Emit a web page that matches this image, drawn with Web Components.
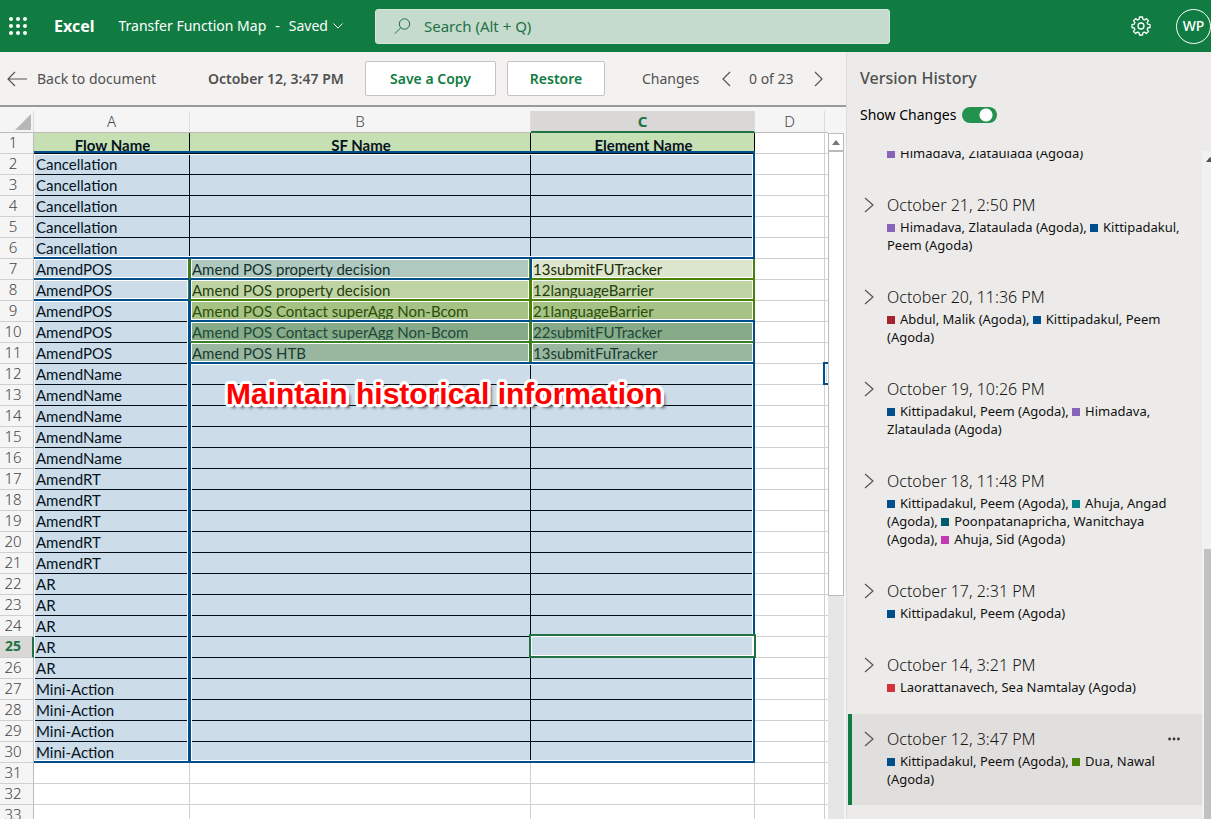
<!DOCTYPE html>
<html lang="en">
<head>
<meta charset="utf-8">
<title>Transfer Function Map - Version History</title>
<style>
  html, body { margin: 0; height: 100%; }
  body { font-family: "Noto Sans", "Open Sans", sans-serif; overflow: hidden; }
</style>
</head>
<body>
<workbook-app></workbook-app>

<template id="app-tpl">
  <style>
    :host { display: flex; flex-direction: column; height: 100vh; }
    main { flex: 1; min-height: 0; display: grid; grid-template-columns: minmax(0, 1fr) 365px; }
    .doc { min-width: 0; min-height: 0; display: flex; flex-direction: column; }
    sheet-grid { flex: 1; min-height: 0; }
  </style>
  <app-header></app-header>
  <main>
    <div class="doc">
      <version-toolbar></version-toolbar>
      <sheet-grid></sheet-grid>
    </div>
    <history-panel></history-panel>
  </main>
</template>

<template id="header-tpl">
  <style>
    :host { display: grid; grid-template-columns: 375px minmax(0, 1fr) 321px; align-items: center; height: 52px; background: #107c41; color: #fff; font-size: 14px; line-height: 20px; }
    button { border: 0; background: none; color: inherit; font: inherit; padding: 0; display: flex; align-items: center; }
    .left { display: flex; align-items: center; padding-left: 9px; white-space: nowrap; }
    .brand { color: #fff; text-decoration: none; font-size: 16px; font-weight: 700; margin-left: 27px; }
    .title { margin-left: 24px; gap: 9px; }
    .title svg { margin-left: -4px; }
    label { display: flex; align-items: center; box-sizing: border-box; height: 35px; padding-left: 18px; gap: 13px; background: #c5dbcd; border: 1px solid #d6e6dc; border-radius: 3px; color: #1e7145; font-size: 15px; }
    input { flex: 1; min-width: 0; border: 0; outline: 0; background: none; font: inherit; color: inherit; padding: 0; }
    input::placeholder { color: #1e7145; opacity: 1; }
    .right { display: flex; justify-content: flex-end; align-items: center; gap: 25px; }
    .avatar { box-sizing: border-box; width: 35px; height: 35px; border: 1px solid #fff; border-radius: 50%; justify-content: center; font-size: 14px; font-weight: 500; }
  </style>
  <div class="left">
    <button aria-label="App launcher">
      <svg width="18" height="18" fill="#fff"><circle cx="2" cy="2" r="2"/><circle cx="9" cy="2" r="2"/><circle cx="16" cy="2" r="2"/><circle cx="2" cy="9" r="2"/><circle cx="9" cy="9" r="2"/><circle cx="16" cy="9" r="2"/><circle cx="2" cy="16" r="2"/><circle cx="9" cy="16" r="2"/><circle cx="16" cy="16" r="2"/></svg>
    </button>
    <a class="brand" href="#">Excel</a>
    <button class="title"><span>Transfer Function Map</span><span>-</span><span>Saved</span>
      <svg width="10" height="6" fill="none" stroke="#fff"><path d="M.5 .5 5 5 9.500 .5"/></svg>
    </button>
  </div>
  <label><svg width="17" height="17" fill="none" stroke="#1e7145"><circle cx="10.500" cy="6" r="5.200"/><path d="M6.800 9.700 .8 15.700"/></svg>
    <input type="text" aria-label="Search" placeholder="Search (Alt + Q)"></label>
  <div class="right">
    <button aria-label="Settings">
      <svg width="20" height="20" viewBox="0 0 20 20" fill="none" stroke="#fff" stroke-width="1.300" stroke-linejoin="round"><path d="M8.500 1h3l.5 2.400 1.400.6 2-1.400 2.100 2.100-1.400 2 .6 1.400 2.300.5v2.900l-2.300.5-.6 1.400 1.400 2-2.100 2.100-2-1.400-1.400.6-.5 2.300h-3L8 16.700l-1.400-.6-2 1.400-2.100-2.100 1.400-2-.6-1.400L1 11.500V8.600l2.300-.5.6-1.400-1.400-2 2.100-2.100 2 1.400L8 3.400z"/><circle cx="10" cy="10" r="3"/></svg>
    </button>
    <button class="avatar" aria-label="Account">WP</button>
  </div>
</template>

<template id="toolbar-tpl">
  <style>
    :host { display: flex; align-items: center; box-sizing: border-box; height: 55px; flex: none; padding-left: 7px; border-bottom: 2px solid #999; background: #f4f2f1; color: #505050; font-size: 14px; line-height: 20px; white-space: nowrap; }
    button { border: 0; background: none; color: inherit; font: inherit; padding: 0; display: flex; align-items: center; justify-content: center; }
    .back { gap: 10px; width: 201px; justify-content: flex-start; }
    .date { width: 157px; font-weight: 600; color: #505050; }
    .action { box-sizing: border-box; height: 35px; background: #fff; border: 1px solid #c3c3c3; border-radius: 2px; color: #107c41; font-weight: 600; }
    .save { width: 131px; }
    .restore { width: 98px; margin-left: 11px; }
    .changes { margin-left: 37px; width: 80px; }
    .count { width: 65px; margin-left: 18px; }
  </style>
  <button class="back"><svg width="20" height="16" fill="none" stroke="#555" stroke-width="1.200"><path d="M20 8H1M8 1 1 8l7 7"/></svg>Back to document</button>
  <span class="date">October 12, 3:47 PM</span>
  <button class="action save">Save a Copy</button>
  <button class="action restore">Restore</button>
  <span class="changes">Changes</span>
  <button aria-label="Previous change"><svg width="9" height="16" fill="none" stroke="#555" stroke-width="1.200"><path d="M8 1 1 8l7 7"/></svg></button>
  <span class="count">0 of 23</span>
  <button aria-label="Next change"><svg width="9" height="16" fill="none" stroke="#555" stroke-width="1.200"><path d="M1 1l7 7-7 7"/></svg></button>
</template>

<template id="grid-tpl">
  <style>
    :host { display: grid; grid-template-columns: minmax(0, 1fr) 16px; padding: 4px 2px 0 0; background: #f5f5f5; overflow: hidden; }
    .view { position: relative; overflow: hidden; }
    table { width: 100%; table-layout: fixed; border-collapse: separate; border-spacing: 0; background: #fff; }
    th, td { box-sizing: border-box; height: 21px; padding: 0; border: solid #d0d0d0; border-width: 0 1px 1px 0; overflow: hidden; white-space: nowrap; }
    thead th { height: 22px; background: #f5f5f5; color: #444; font-size: 15px; line-height: 18px; font-weight: 300; padding-bottom: 2px; border-color: #dcdcdc; border-bottom-color: #bbb; }
    thead th:last-child { border-right: 0; }
    thead th.on { background: #d9d8d6; color: #217346; font-weight: 700; border-bottom: 2px solid #217346; padding-bottom: 1px; }
    tbody th { background: #f5f5f5; color: #444; font-size: 15px; line-height: 18px; font-weight: 300; padding: 0 7px 2px 0; border-right-color: #bbb; }
    tbody th.on { background: #d9d8d6; color: #217346; font-weight: 700; font-size: 14px; border-right: 2px solid #217346; padding-right: 6px; }
    td { font: 15px/20px Lato, "Noto Sans", sans-serif; color: #06131f; padding-left: 2px; }
    td:last-child { border-right: 0; }
    td.data { background: #ccdce8; border-color: #000c16; }
    td.title { background: #c6e0b4; border-color: #000; text-align: center; font-weight: 700; line-height: 16px; padding-top: 3px; }
    .corner { width: 0; height: 0; margin: 2px 2px 0 15px; border: solid transparent; border-width: 0 0 16px 16px; border-bottom-color: #b7b7b7; }
    .marks { position: absolute; inset: 22px 0 auto 0; display: grid; grid-template-columns: 34px 156px 341px 224px 70px 1fr; grid-template-rows: repeat(33, 21px); pointer-events: none; }
    .note { position: absolute; left: 226px; top: 265px; margin: 0; font: 700 30px/36px "Liberation Sans", Arial, sans-serif; color: #f00; white-space: nowrap;
      text-shadow: 3px 0 #fff, -3px 0 #fff, 0 3px #fff, 0 -3px #fff, 2px 2px #fff, -2px 2px #fff, 2px -2px #fff, -2px -2px #fff, 3px 1px #fff, 3px -1px #fff, -3px 1px #fff, -3px -1px #fff, 1px 3px #fff, -1px 3px #fff, 1px -3px #fff, -1px -3px #fff, 4px 4px 3px #555; }
    .scroll { display: grid; grid-template-rows: 18px 445px 1fr; margin-top: 22px; background: #e6e6e6; }
    .scroll button, .scroll div { box-sizing: border-box; border: 1px solid #bbb; background: #fff; padding: 0; margin: 0; display: flex; align-items: center; justify-content: center; }
    .scroll div { border-top-width: 2px; margin-top: -1px; }
  </style>
  <div class="view">
    <table>
      <colgroup><col style="width:34px"><col style="width:156px"><col style="width:341px"><col style="width:224px"><col style="width:70px"><col></colgroup>
      <thead><tr><th aria-label="Select all"><div class="corner"></div></th><th scope="col">A</th><th scope="col">B</th><th scope="col" class="on">C</th><th scope="col">D</th><th></th></tr></thead>
      <tbody></tbody>
    </table>
    <div class="marks"></div>
    <p class="note">Maintain historical information</p>
  </div>
  <div class="scroll"><button aria-label="Scroll up"><svg width="8" height="5" fill="#777"><path d="M4 0l4 5H0z"/></svg></button><div></div></div>
</template>

<template id="mark-tpl">
  <style>
    :host { display: block; box-sizing: border-box; margin: -2px 0 0 -1px; border: 2px solid #004e8c; box-shadow: inset 0 0 0 1px #fff; }
    :host([first]) { margin-left: 0; border-left: 0; }
    :host([top]) { margin-top: -3px; box-shadow: inset 0 1px #000c16, inset 0 2px #fff, inset 0 0 0 1px #fff; }
    :host([active]) { margin: -3px -1px 0 -2px; border-color: #217346; }
    :host([partial]) { margin-left: -2px; border-right: 0; background: #ccdce8; }
  </style>
</template>

<template id="panel-tpl">
  <style>
    :host { display: flex; flex-direction: column; min-height: 0; box-sizing: border-box; border-left: 1px solid #dcdcdc; background: #ecebe9; }
    h2 { margin: 14px 0 0 13px; font-size: 16px; line-height: 24px; font-weight: 500; color: #505050; }
    label { display: flex; align-items: center; gap: 6px; margin: 13px 0 0 13px; height: 24px; font-size: 14px; line-height: 18px; color: #000; }
    input { appearance: none; margin: 0; width: 35px; height: 16px; border-radius: 8px; background: radial-gradient(circle at 24px 8px, #fff 6px, #23914f 7px); }
    .list { flex: 1; min-height: 0; margin-top: 24px; display: grid; grid-template-columns: minmax(0, 1fr) 9px; overflow: hidden; }
    .items { min-height: 0; overflow: hidden; padding-left: 1px; }
    .items > :first-child { margin-top: -7px; }
    .bar { display: grid; grid-template-rows: 398px 1fr; background: #f1f1f1; }
    .bar svg { margin: 6px 0 0 4px; }
    .bar div { background: #c1c1c1; margin-left: 2px; }
  </style>
  <h2>Version History</h2>
  <label>Show Changes <input type="checkbox" role="switch" checked></label>
  <div class="list">
    <div class="items">
      <version-item><author-name color="#8764b8">Himadava, Zlataulada (Agoda)</author-name></version-item>
      <version-item date="October 21, 2:50 PM"><author-name color="#8764b8">Himadava, Zlataulada (Agoda),</author-name> <author-name color="#004e8c">Kittipadakul, Peem (Agoda)</author-name></version-item>
      <version-item date="October 20, 11:36 PM"><author-name color="#a4262c">Abdul, Malik (Agoda),</author-name> <author-name color="#004e8c">Kittipadakul, Peem (Agoda)</author-name></version-item>
      <version-item date="October 19, 10:26 PM"><author-name color="#004e8c">Kittipadakul, Peem (Agoda),</author-name> <author-name color="#8764b8">Himadava, Zlataulada (Agoda)</author-name></version-item>
      <version-item date="October 18, 11:48 PM"><author-name color="#004e8c">Kittipadakul, Peem (Agoda),</author-name> <author-name color="#038387">Ahuja, Angad (Agoda),</author-name> <author-name color="#005b70">Poonpatanapricha, Wanitchaya (Agoda),</author-name> <author-name color="#c239b3">Ahuja, Sid (Agoda)</author-name></version-item>
      <version-item date="October 17, 2:31 PM"><author-name color="#004e8c">Kittipadakul, Peem (Agoda)</author-name></version-item>
      <version-item date="October 14, 3:21 PM"><author-name color="#d13438">Laorattanavech, Sea Namtalay (Agoda)</author-name></version-item>
      <version-item date="October 12, 3:47 PM" selected><author-name color="#004e8c">Kittipadakul, Peem (Agoda),</author-name> <author-name color="#498205">Dua, Nawal (Agoda)</author-name></version-item>
    </div>
    <div class="bar"><svg width="8" height="6" fill="#505050"><path d="M4 0l4 5H0z"/></svg><div></div></div>
  </div>
</template>

<template id="item-tpl">
  <style>
    :host { display: block; margin-bottom: 1px; padding: 12px 22px 17px 16px; }
    :host(:not([date])) { padding-top: 0; }
    :host(:not([date])) header { display: none; }
    :host([selected]) { background: #e1dfdd; border-left: 4px solid #107c41; padding-left: 12px; }
    header { display: flex; align-items: center; height: 26px; }
    h3 { margin: 0 0 0 13px; flex: 1; font-size: 16px; line-height: 26px; font-weight: 300; color: #151413; }
    button { border: 0; background: none; padding: 0; display: flex; }
    .more { display: none; }
    :host([selected]) .more { display: flex; }
    .names { margin-left: 23px; font-size: 13px; line-height: 18px; font-weight: 400; color: #111; }
  </style>
  <header>
    <button aria-label="Expand"><svg width="10" height="16" fill="none" stroke="#555" stroke-width="1.200"><path d="M1 1l8 7-8 7"/></svg></button>
    <h3></h3>
    <button class="more" aria-label="More options"><svg width="12" height="4" fill="#333"><circle cx="1.600" cy="2" r="1.400"/><circle cx="6" cy="2" r="1.400"/><circle cx="10.400" cy="2" r="1.400"/></svg></button>
  </header>
  <div class="names"><slot></slot></div>
</template>

<template id="author-tpl">
  <style>
    :host { display: inline; }
    i { display: inline-block; width: 8px; height: 8px; margin-right: 5px; }
  </style><i></i><slot></slot></template>

<script>
  const define = (name, tpl, setup) => customElements.define(name, class extends HTMLElement {
    constructor() {
      super();
      this.attachShadow({ mode: 'open' }).append(document.getElementById(tpl).content.cloneNode(true));
    }
    connectedCallback() { if (setup && !this.ready) { this.ready = true; setup(this, this.shadowRoot); } }
  });

  define('author-name', 'author-tpl', (el, root) => {
    root.querySelector('i').style.background = el.getAttribute('color');
  });
  define('version-item', 'item-tpl', (el, root) => {
    root.querySelector('h3').textContent = el.getAttribute('date') || '';
  });
  define('history-panel', 'panel-tpl');
  define('change-mark', 'mark-tpl');
  define('version-toolbar', 'toolbar-tpl');
  define('app-header', 'header-tpl');

  const flows = [['Cancellation', 5], ['AmendPOS', 5], ['AmendName', 5], ['AmendRT', 5], ['AR', 5], ['Mini-Action', 4]]
    .flatMap(([name, n]) => Array(n).fill(name));
  // Row number: [B text, C text, B fill, C fill, B text colour, C text colour]
  const edited = {
    7: ['Amend POS property decision', '13submitFUTracker', '#b0c9c0', '#dce6cc', '#142f2b', '#1b2a08'],
    8: ['Amend POS property decision', '12languageBarrier', '#bfd3a4', '#bfd3a4', '#26400d', '#26400d'],
    9: ['Amend POS Contact superAgg Non-Bcom', '21languageBarrier', '#a6c284', '#a6c284', '#2a4f08', '#2a4f08'],
    10: ['Amend POS Contact superAgg Non-Bcom', '22submitFUTracker', '#87aa88', '#87aa88', '#1c4a38', '#1c4a38'],
    11: ['Amend POS HTB', '13submitFuTracker', '#99b79f', '#99b79f', '#183b34', '#183b34']
  };
  const BLUE = '#004e8c', GREEN = '#498205', MIX = '#3a7d22';
  // [grid area (row / column / row end / column end), border colours, flags]
  const marks = [
    ['7/2/8/3', [BLUE, MIX, BLUE, BLUE], 'first'],
    ['8/2/9/3', [BLUE, MIX, BLUE, BLUE], 'first'],
    ['9/2/31/3', [BLUE, BLUE, BLUE, BLUE], 'first'],
    ['8/3/9/4', [BLUE, GREEN, GREEN, BLUE], ''],
    ['8/4/9/5', [GREEN, GREEN, GREEN, GREEN], ''],
    ['7/3/8/4', [BLUE, GREEN, BLUE, MIX], ''],
    ['7/4/8/5', [BLUE, GREEN, GREEN, BLUE], ''],
    ['9/3/10/4', [GREEN, GREEN, BLUE, BLUE], ''],
    ['9/4/10/5', [GREEN, GREEN, BLUE, GREEN], ''],
    ['10/3/11/4', [BLUE, MIX, MIX, BLUE], ''],
    ['10/4/11/5', [BLUE, BLUE, MIX, MIX], ''],
    ['11/3/12/4', [MIX, MIX, BLUE, BLUE], ''],
    ['11/4/12/5', [MIX, BLUE, BLUE, MIX], ''],
    ['12/3/31/5', [BLUE, BLUE, BLUE, BLUE], ''],
    ['2/2/7/5', [BLUE, BLUE, BLUE, BLUE], 'first top'],
    ['12/6/13/7', [BLUE, BLUE, BLUE, BLUE], 'partial'],
    ['25/4/26/5', null, 'active']
  ];

  define('sheet-grid', 'grid-tpl', (el, root) => {
    const body = root.querySelector('tbody');
    const titles = ['Flow Name', 'SF Name', 'Element Name'];
    for (let r = 1; r <= 33; r++) {
      const tr = body.insertRow();
      const head = document.createElement('th');
      head.scope = 'row';
      head.textContent = r;
      if (r === 25) head.className = 'on';
      tr.append(head);
      const e = edited[r] || [];
      const texts = r === 1 ? titles : [flows[r - 2] || '', e[0] || '', e[1] || ''];
      for (let c = 0; c < 5; c++) {
        const td = tr.insertCell();
        if (c > 2) continue;
        td.textContent = texts[c];
        if (r <= 30) td.className = r === 1 ? 'title' : 'data';
        if (c && e.length) { td.style.background = e[c + 1]; td.style.color = e[c + 3]; }
      }
    }
    const layer = root.querySelector('.marks');
    for (const [area, colours, flags] of marks) {
      const m = document.createElement('change-mark');
      m.style.gridArea = area;
      if (colours) m.style.borderColor = colours.join(' ');
      flags.split(' ').filter(Boolean).forEach(f => m.setAttribute(f, ''));
      layer.append(m);
    }
  });
  define('workbook-app', 'app-tpl');
</script>
</body>
</html>
